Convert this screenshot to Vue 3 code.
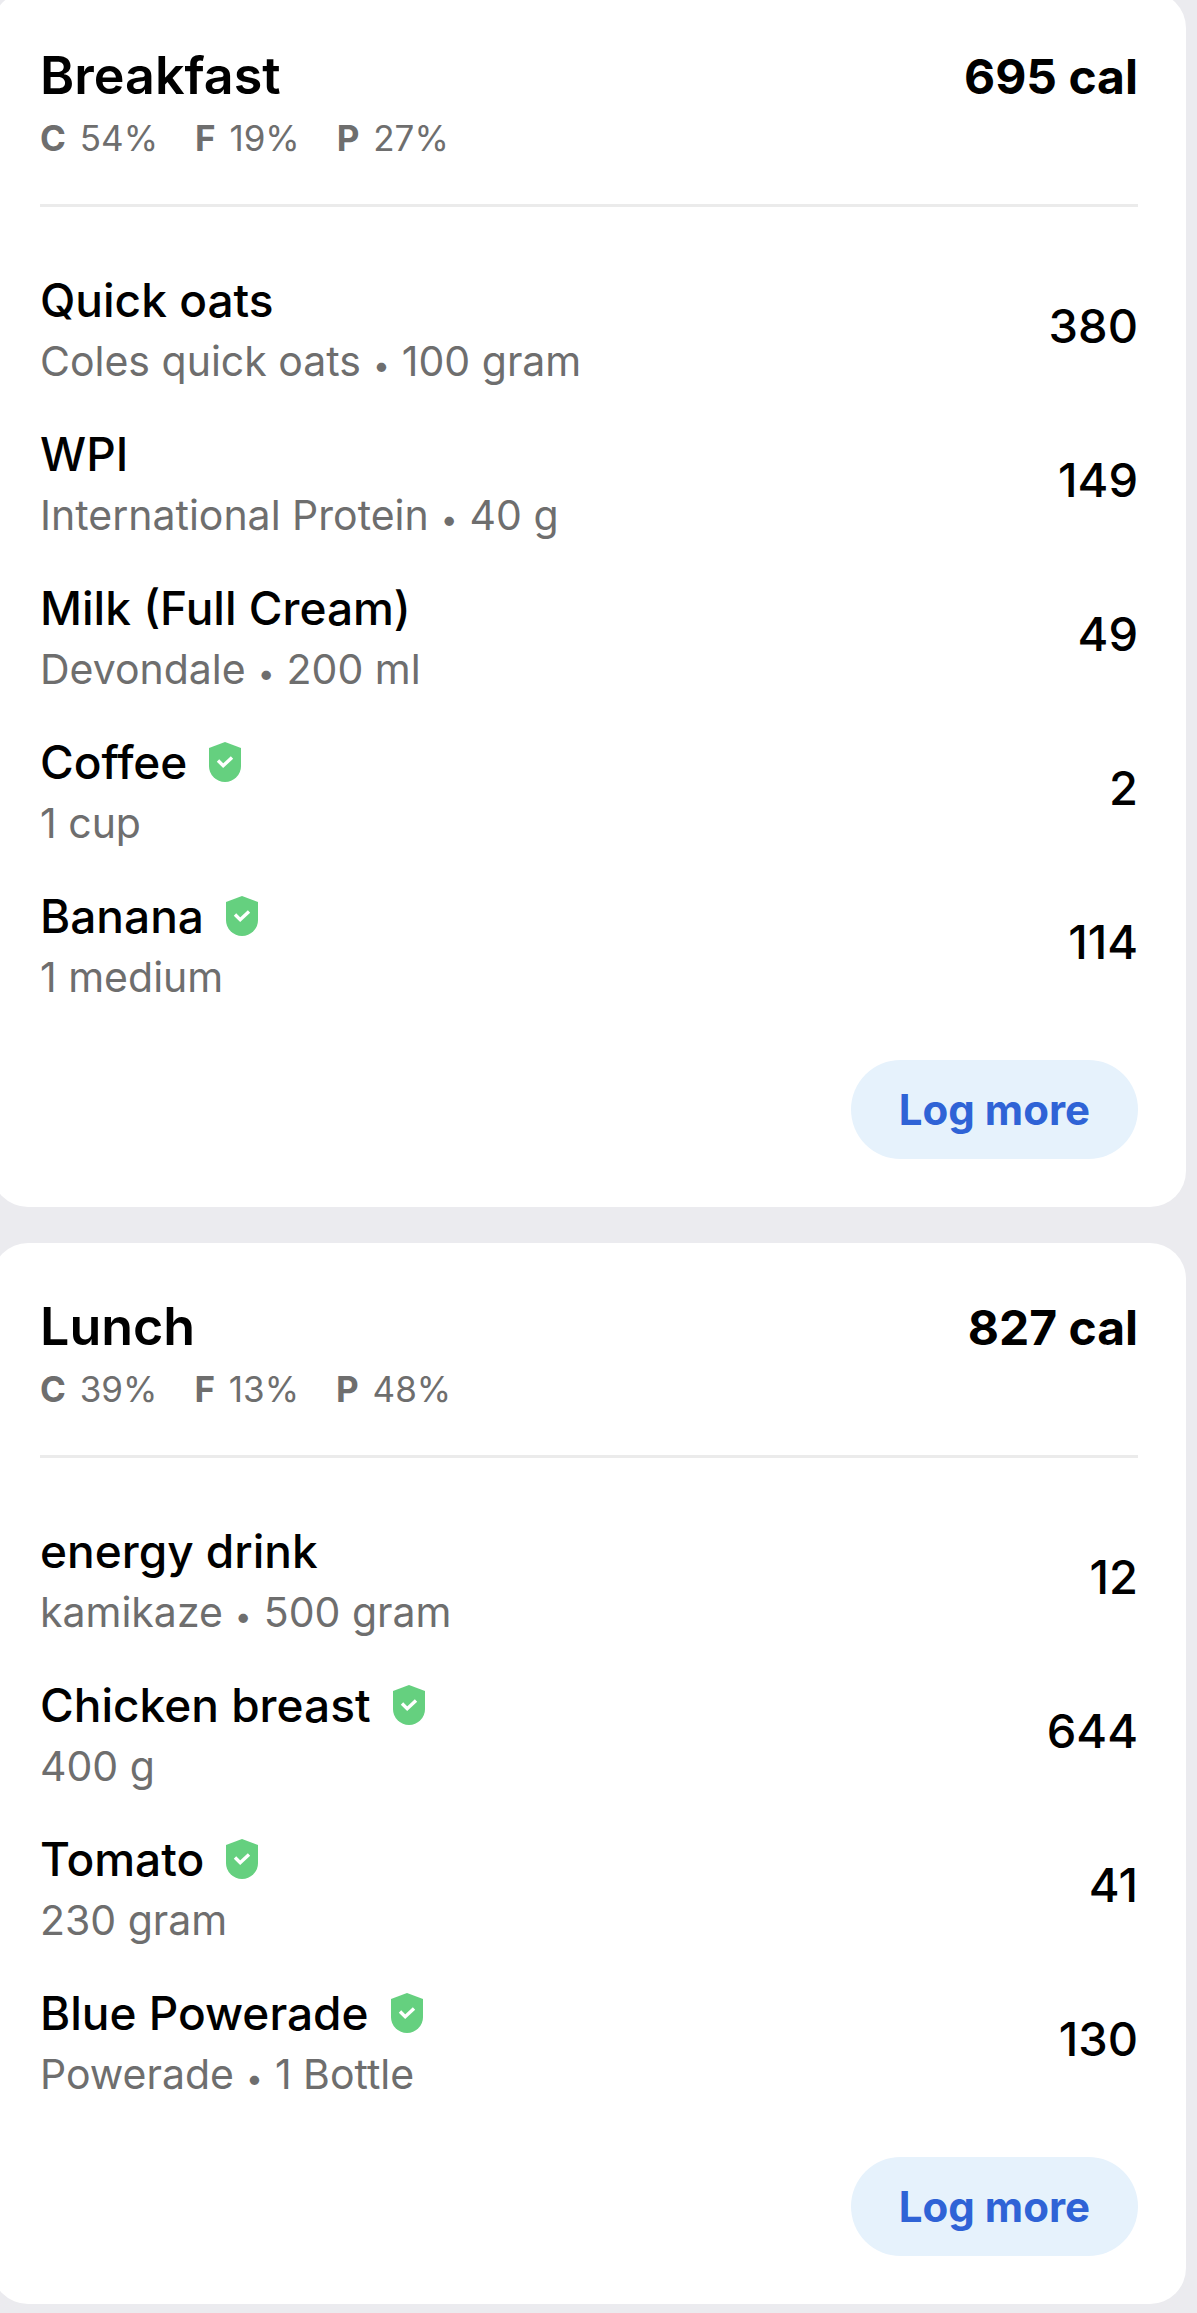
<template>
  <main class="diary">
    <section v-for="meal in meals" :key="meal.name" class="card">
      <header class="card-header">
        <div>
          <h2 class="meal-name">{{ meal.name }}</h2>
          <ul class="macros">
            <li v-for="macro in meal.macros" :key="macro.label">
              <b>{{ macro.label }}</b> {{ macro.percent }}%
            </li>
          </ul>
        </div>
        <span class="meal-total">{{ meal.total }} cal</span>
      </header>

      <ul class="foods">
        <li v-for="food in meal.foods" :key="food.name" class="food">
          <div>
            <div class="food-name">
              {{ food.name }}
              <svg v-if="food.verified" class="badge" viewBox="0 0 32 40" aria-hidden="true">
                <path d="M16 0 L32 6 V24 A16 16 0 0 1 0 24 V6 Z" fill="#65d07f" />
                <path
                  d="M9 18.5 L14.2 23.7 L23 15.5"
                  fill="none"
                  stroke="#fff"
                  stroke-width="3.4"
                />
              </svg>
            </div>
            <div class="food-detail">
              <span v-if="food.brand">{{ food.brand }}</span>
              <span v-if="food.brand" class="dot">•</span>
              <span>{{ food.serving }}</span>
            </div>
          </div>
          <span class="food-cal">{{ food.cal }}</span>
        </li>
      </ul>

      <footer class="card-footer">
        <button type="button" class="log-btn">Log more</button>
      </footer>
    </section>
  </main>
</template>

<script setup>
const meals = [
  {
    name: 'Breakfast',
    total: 695,
    macros: [
      { label: 'C', percent: 54 },
      { label: 'F', percent: 19 },
      { label: 'P', percent: 27 },
    ],
    foods: [
      { name: 'Quick oats', brand: 'Coles quick oats', serving: '100 gram', cal: 380 },
      { name: 'WPI', brand: 'International Protein', serving: '40 g', cal: 149 },
      { name: 'Milk (Full Cream)', brand: 'Devondale', serving: '200 ml', cal: 49 },
      { name: 'Coffee', serving: '1 cup', cal: 2, verified: true },
      { name: 'Banana', serving: '1 medium', cal: 114, verified: true },
    ],
  },
  {
    name: 'Lunch',
    total: 827,
    macros: [
      { label: 'C', percent: 39 },
      { label: 'F', percent: 13 },
      { label: 'P', percent: 48 },
    ],
    foods: [
      { name: 'energy drink', brand: 'kamikaze', serving: '500 gram', cal: 12 },
      { name: 'Chicken breast', serving: '400 g', cal: 644, verified: true },
      { name: 'Tomato', serving: '230 gram', cal: 41, verified: true },
      { name: 'Blue Powerade', brand: 'Powerade', serving: '1 Bottle', cal: 130, verified: true },
    ],
  },
]
</script>

<style>
body {
  background: #ebebef;
  overflow-x: hidden;
}
</style>

<style scoped>
.diary {
  display: flex;
  flex-direction: column;
  gap: 36px;
  margin: -8px 11px 0 -8px;
  padding-bottom: 9px;
  font-family: Inter, 'Liberation Sans', sans-serif;
  color: #000;
}

.card {
  padding: 48px;
  border-radius: 36px;
  background: #fff;
}

.card-header {
  display: flex;
  justify-content: space-between;
  align-items: baseline;
  padding-bottom: 40px;
  border-bottom: 3px solid #ebebeb;
}

.meal-name {
  margin: 0;
  font-size: 52px;
  font-weight: 600;
  line-height: 72px;
}

.meal-total {
  font-size: 48px;
  font-weight: 700;
  line-height: 72px;
}

.macros {
  display: flex;
  gap: 37px;
  margin: 0;
  padding: 0;
  list-style: none;
  font-size: 35px;
  line-height: 52px;
  color: #6e6e6e;
}

.macros b {
  margin-right: 4px;
  font-weight: 700;
}

.foods {
  display: flex;
  flex-direction: column;
  gap: 32px;
  margin: 0;
  padding: 57px 0 58px;
  list-style: none;
}

.food {
  display: flex;
  justify-content: space-between;
  align-items: center;
}

.food-name {
  display: flex;
  align-items: center;
  gap: 22px;
  font-size: 46px;
  font-weight: 500;
  line-height: 72px;
}

.badge {
  width: 32px;
  height: 40px;
}

.food-detail {
  font-size: 41px;
  line-height: 50px;
  color: #6e6e6e;
}

.dot {
  margin: 0 12px;
  font-size: 30px;
  line-height: 1;
  vertical-align: middle;
}

.food-cal {
  font-size: 47px;
  font-weight: 500;
}

.card-footer {
  display: flex;
  justify-content: flex-end;
}

.log-btn {
  padding: 0 48px;
  border: none;
  border-radius: 50px;
  background: #e6f2fc;
  font-family: inherit;
  font-size: 42px;
  font-weight: 700;
  line-height: 99px;
  color: #2f63d6;
  cursor: pointer;
}
</style>
